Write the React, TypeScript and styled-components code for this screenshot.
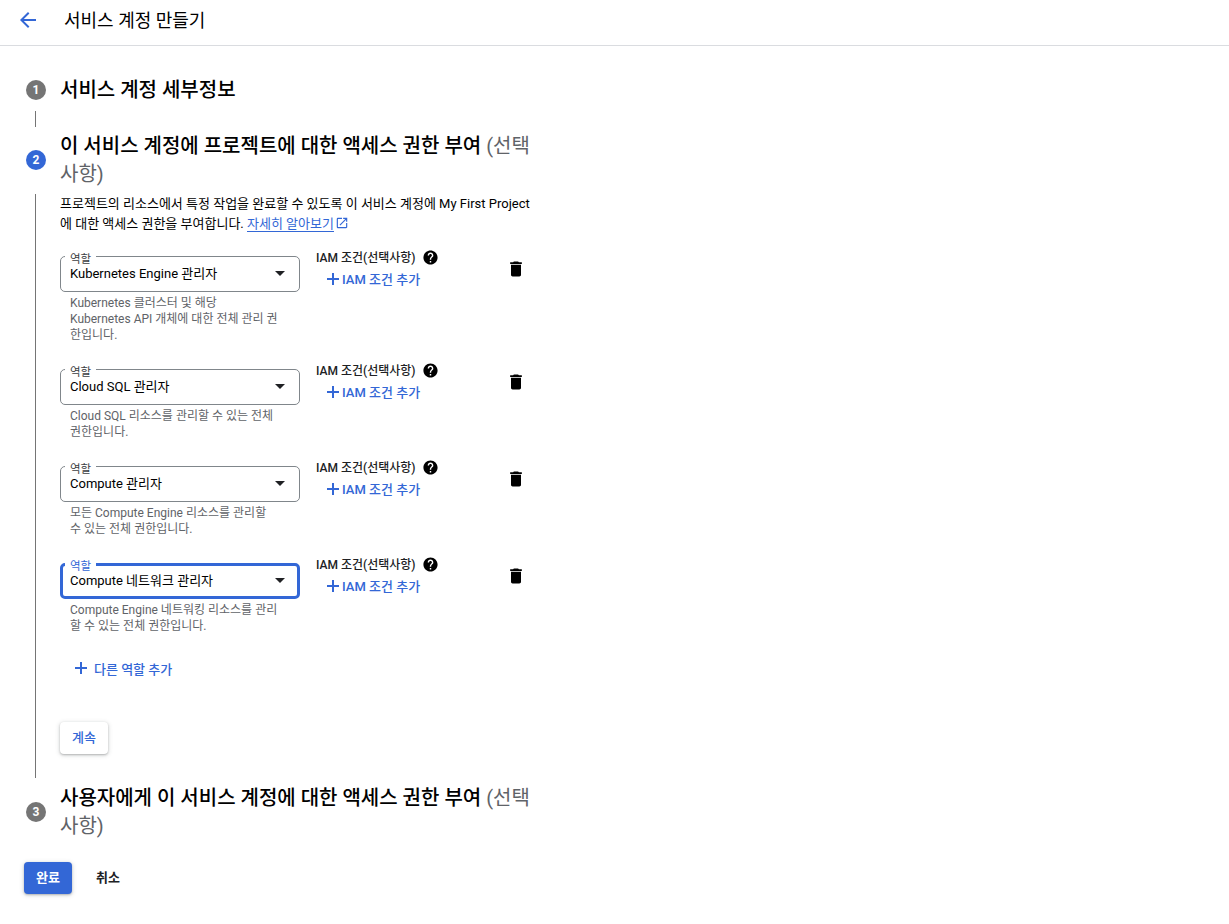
import React from 'react';
import styled, { createGlobalStyle } from 'styled-components';

const roles = [
  { name: 'Kubernetes Engine 관리자', help: ['Kubernetes 클러스터 및 해당', 'Kubernetes API 개체에 대한 전체 관리 권', '한입니다.'] },
  { name: 'Cloud SQL 관리자', help: ['Cloud SQL 리소스를 관리할 수 있는 전체', '권한입니다.'] },
  { name: 'Compute 관리자', help: ['모든 Compute Engine 리소스를 관리할', '수 있는 전체 권한입니다.'] },
  { name: 'Compute 네트워크 관리자', help: ['Compute Engine 네트워킹 리소스를 관리', '할 수 있는 전체 권한입니다.'], focused: true },
];

const PlusIcon = () => (
  <svg width='12' height='12' viewBox='0 0 12 12' fill='#3367d6'>
    <path d='M5 0h2v5h5v2H7v5H5V7H0V5h5z' />
  </svg>
);

function RoleRow({ name, help, focused }: { name: string; help: string[]; focused?: boolean }) {
  return (
    <Row>
      <RoleColumn>
        <SelectBox $focused={focused}>
          <FloatLabel $focused={focused}>역할</FloatLabel>
          <span>{name}</span>
          <Caret />
        </SelectBox>
        <HelpText>
          {help.map((line) => (
            <div key={line}>{line}</div>
          ))}
        </HelpText>
      </RoleColumn>
      <IamColumn>
        <IamLabel>
          IAM 조건(선택사항)
          <HelpIcon width='17' height='17' viewBox='0 0 24 24' fill='#000'>
            <path d='M12 2C6.48 2 2 6.48 2 12s4.48 10 10 10 10-4.48 10-10S17.52 2 12 2zm1 17h-2v-2h2v2zm2.07-7.75-.9.92C13.45 12.9 13 13.5 13 15h-2v-.5c0-1.1.45-2.1 1.17-2.83l1.24-1.26c.37-.36.59-.86.59-1.41 0-1.1-.9-2-2-2s-2 .9-2 2H8c0-2.21 1.79-4 4-4s4 1.79 4 4c0 .88-.36 1.68-.93 2.25z' />
          </HelpIcon>
        </IamLabel>
        <IamAdd>
          <PlusIcon />
          IAM 조건 추가
        </IamAdd>
      </IamColumn>
      <TrashButton>
        <svg width='20' height='20' viewBox='0 0 24 24' fill='#000'>
          <path d='M6 19c0 1.1.9 2 2 2h8c1.1 0 2-.9 2-2V7H6v12zM19 4h-3.5l-1-1h-5l-1 1H5v2h14V4z' />
        </svg>
      </TrashButton>
    </Row>
  );
}

export default function App() {
  return (
    <Page>
      <GlobalStyle />
      <Header>
        <svg width='24' height='24' viewBox='0 0 24 24' fill='#3367d6'>
          <path d='M20 11H7.83l5.59-5.59L12 4l-8 8 8 8 1.41-1.41L7.83 13H20v-2z' />
        </svg>
        <HeaderTitle>서비스 계정 만들기</HeaderTitle>
      </Header>
      <Main>
        <StepOne>
          <Badge>1</Badge>
          <StepTitle>서비스 계정 세부정보</StepTitle>
        </StepOne>
        <ShortLine />
        <StepHead>
          <Badge $active>2</Badge>
          <StepTitle>
            이 서비스 계정에 프로젝트에 대한 액세스 권한 부여 <Optional>(선택사항)</Optional>
          </StepTitle>
        </StepHead>
        <StepBody>
          <Description>
            프로젝트의 리소스에서 특정 작업을 완료할 수 있도록 이 서비스 계정에 My First Project에 대한 액세스 권한을 부여합니다.{' '}
            <LearnMore>자세히 알아보기</LearnMore>
            <ExternalIcon width='14' height='14' viewBox='0 0 24 24' fill='#3367d6'>
              <path d='M19 19H5V5h7V3H5a2 2 0 0 0-2 2v14a2 2 0 0 0 2 2h14c1.1 0 2-.9 2-2v-7h-2v7zM14 3v2h3.59l-9.83 9.83 1.41 1.41L19 6.41V10h2V3h-7z' />
            </ExternalIcon>
          </Description>
          {roles.map((role) => (
            <RoleRow key={role.name} {...role} />
          ))}
          <AddRole>
            <PlusIcon />
            다른 역할 추가
          </AddRole>
          <ContinueButton>계속</ContinueButton>
        </StepBody>
        <StepHeadLast>
          <Badge>3</Badge>
          <StepTitle>
            사용자에게 이 서비스 계정에 대한 액세스 권한 부여 <Optional>(선택사항)</Optional>
          </StepTitle>
        </StepHeadLast>
        <Actions>
          <DoneButton>완료</DoneButton>
          <CancelButton>취소</CancelButton>
        </Actions>
      </Main>
    </Page>
  );
}

const GlobalStyle = createGlobalStyle`
  html, body {
    margin: 0;
    background: #fff;
  }
  body {
    font-family: Roboto, "Noto Sans CJK KR", sans-serif;
    color: #000;
  }
`;

const Page = styled.div`
  width: 1229px;
  height: 924px;
  overflow: hidden;
`;

const Header = styled.header`
  display: flex;
  align-items: center;
  height: 45px;
  padding: 0 0 6px 16px;
  box-sizing: border-box;
  box-shadow: 0 1px 0 #dadce0;
`;

const HeaderTitle = styled.h1`
  margin: 0 0 2px 24px;
  font-size: 18px;
  font-weight: 400;
`;

const Main = styled.main`
  padding: 31px 0 0 26px;
  width: 506px;
`;

const StepOne = styled.div`
  display: flex;
  align-items: center;
  gap: 14px;
  height: 28px;
`;

const Badge = styled.div<{ $active?: boolean }>`
  flex: none;
  display: grid;
  place-items: center;
  width: 20px;
  height: 20px;
  border-radius: 50%;
  background: ${(p) => (p.$active ? '#3367d6' : '#757575')};
  color: #fff;
  font-size: 12px;
  font-weight: 700;
`;

const StepTitle = styled.h2`
  margin: 0;
  font-size: 20px;
  line-height: 28px;
  font-weight: 500;
`;

const Optional = styled.span`
  color: #5f6368;
  font-weight: 400;
`;

const ShortLine = styled.div`
  width: 1px;
  height: 16px;
  margin: 7px 0 5px 9px;
  background: #757575;
`;

const StepHead = styled.div`
  display: flex;
  align-items: center;
  gap: 14px;
`;

const StepHeadLast = styled(StepHead)`
  margin-top: 6px;
`;

const StepBody = styled.div`
  margin: 6px 0 0 9px;
  padding: 0 0 24px 24px;
  border-left: 1px solid #757575;
`;

const Description = styled.p`
  margin: 0 0 22px;
  font-size: 13px;
  line-height: 20px;
  width: 472px;
`;

const LearnMore = styled.a`
  color: #3367d6;
  border-bottom: 1px solid #3367d6;
`;

const ExternalIcon = styled.svg`
  margin-left: 1px;
  vertical-align: -2px;
`;

const Row = styled.div`
  display: flex;
  align-items: flex-start;
  margin-bottom: 26px;
`;

const RoleColumn = styled.div`
  width: 240px;
`;

const SelectBox = styled.div<{ $focused?: boolean }>`
  position: relative;
  display: flex;
  align-items: center;
  justify-content: space-between;
  box-sizing: border-box;
  height: 36px;
  padding: 0 ${(p) => (p.$focused ? '12px' : '14px')} 4px ${(p) => (p.$focused ? '7px' : '9px')};
  border: ${(p) => (p.$focused ? '3px solid #3367d6' : '1px solid #80868b')};
  border-radius: 5px;
  font-size: 13px;
`;

const FloatLabel = styled.label<{ $focused?: boolean }>`
  position: absolute;
  top: ${(p) => (p.$focused ? '-5px' : '-3px')};
  left: ${(p) => (p.$focused ? '2px' : '4px')};
  padding: 0 5px;
  background: #fff;
  font-size: 11.5px;
  line-height: 10px;
  color: ${(p) => (p.$focused ? '#3367d6' : '#3c4043')};
`;

const Caret = styled.div`
  width: 0;
  height: 0;
  margin-top: 3px;
  border-left: 5px solid transparent;
  border-right: 5px solid transparent;
  border-top: 5px solid #202124;
`;

const HelpText = styled.div`
  margin-top: 3px;
  padding: 0 10px;
  font-size: 12px;
  line-height: 16px;
  color: #5f6368;
`;

const IamColumn = styled.div`
  width: 176px;
  margin-left: 16px;
`;

const IamLabel = styled.div`
  display: flex;
  align-items: center;
  gap: 6px;
  height: 18px;
  margin-top: -9px;
  font-size: 12px;
  font-weight: 500;
  color: #202124;
`;

const HelpIcon = styled.svg`
  margin-top: 2px;
`;

const IamAdd = styled.div`
  display: flex;
  align-items: center;
  gap: 3px;
  margin: 4px 0 0 11px;
  font-size: 13px;
  font-weight: 500;
  color: #3367d6;
`;

const TrashButton = styled.div`
  margin-top: 3px;
  margin-left: 14px;
`;

const AddRole = styled(IamAdd)`
  gap: 7px;
  margin: -1px 0 0 15px;
  height: 18px;
`;

const ContinueButton = styled.button`
  display: block;
  width: 48px;
  height: 32px;
  margin-top: 45px;
  padding: 0 0 3px;
  border: 0;
  border-radius: 4px;
  background: #fff;
  box-shadow: 0 1px 2px rgba(60, 64, 67, 0.3), 0 1px 4px 1px rgba(60, 64, 67, 0.15);
  font: 500 13px Roboto, "Noto Sans CJK KR", sans-serif;
  color: #3367d6;
`;

const Actions = styled.div`
  display: flex;
  align-items: center;
  gap: 8px;
  margin: 22px 0 0 -2px;
`;

const DoneButton = styled(ContinueButton)`
  margin: 0;
  background: #3367d6;
  color: #fff;
  font-weight: 700;
`;

const CancelButton = styled.button`
  width: 56px;
  height: 32px;
  padding: 0 0 3px;
  border: 0;
  background: none;
  font: 700 13px Roboto, "Noto Sans CJK KR", sans-serif;
  color: #202124;
`;
